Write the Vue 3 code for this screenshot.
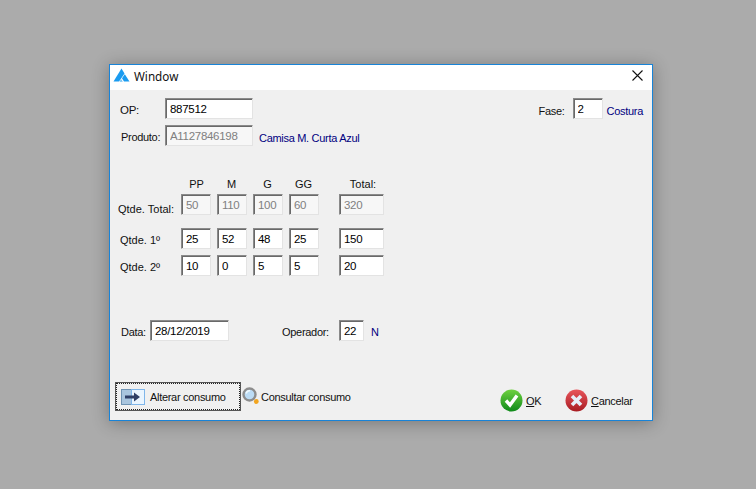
<script setup>
const sizes = ['PP', 'M', 'G', 'GG']

const rows = [
  { label: 'Qtde. Total:', values: [50, 110, 100, 60], total: 320, disabled: true, cls: 'row-total' },
  { label: 'Qtde. 1º', values: [25, 52, 48, 25], total: 150, disabled: false, cls: 'row-first' },
  { label: 'Qtde. 2º', values: [10, 0, 5, 5], total: 20, disabled: false, cls: 'row-second' }
]
</script>

<template>
  <div class="desktop">
    <div class="window">
      <div class="titlebar">
        <svg class="logo" width="17" height="15" viewBox="0 0 17 15">
          <path d="M8.5 0.5 L11.5 5.5 L6 13.5 L0.5 13.5 Z" fill="#1a9bf0" />
          <path d="M11.8 6.2 L16.5 13.5 L11 13.5 L9 10.2 Z" fill="#1a9bf0" />
          <path d="M8 11 L9.8 13.8 L6.6 13.8 Z" fill="#6cc0f5" />
        </svg>
        <span class="title">Window</span>
        <svg class="close" width="11" height="11" viewBox="0 0 11 11">
          <path d="M0.5 0.5 L10.5 10.5 M10.5 0.5 L0.5 10.5" stroke="#111" stroke-width="1.1" fill="none" />
        </svg>
      </div>

      <div class="body">
        <div class="top">
          <div class="top-left">
            <div class="field-row">
              <label class="lbl-main lbl-op">OP:</label>
              <input class="input input-main" value="887512" />
            </div>
            <div class="field-row field-row-second">
              <label class="lbl-main lbl-produto">Produto:</label>
              <input class="input input-main" value="A1127846198" disabled />
              <span class="link-text desc">Camisa M. Curta Azul</span>
            </div>
          </div>
          <div class="field-row fase">
            <label class="lbl-fase">Fase:</label>
            <input class="input input-fase" value="2" />
            <span class="link-text costura">Costura</span>
          </div>
        </div>

        <div class="qty">
          <div class="qty-head">
            <span class="qty-spacer"></span>
            <span v-for="s in sizes" :key="s" class="head-cell">{{ s }}</span>
            <span class="head-cell head-total">Total:</span>
          </div>
          <div v-for="row in rows" :key="row.label" class="qty-row" :class="row.cls">
            <label class="qty-label">{{ row.label }}</label>
            <input
              v-for="(v, i) in row.values"
              :key="i"
              class="input input-qty"
              :value="v"
              :disabled="row.disabled"
            />
            <input class="input input-sum" :value="row.total" :disabled="row.disabled" />
          </div>
        </div>

        <div class="data-row">
          <label class="lbl-data">Data:</label>
          <input class="input input-data" value="28/12/2019" />
          <label class="lbl-operador">Operador:</label>
          <input class="input input-op" value="22" />
          <span class="link-text oper-name">N</span>
        </div>

        <div class="footer">
          <button class="btn-alterar">
            <svg width="24" height="16" viewBox="0 0 24 16">
              <rect x="0.5" y="0.5" width="10" height="15" fill="#a9c5de" stroke="#6f93b3" />
              <rect x="10.5" y="0.5" width="13" height="15" fill="#eaf5ff" stroke="#7fb6ea" />
              <path d="M4 6.5 H13 V3.5 L19 8 L13 12.5 V9.5 H4 Z" fill="#2f3f66" />
            </svg>
            <span>Alterar consumo</span>
          </button>
          <button class="btn-flat btn-consultar">
            <svg width="18" height="18" viewBox="0 0 18 18">
              <circle cx="7.5" cy="7.5" r="6" fill="#bcdcf5" stroke="#8d8d8d" stroke-width="2.4" />
              <path d="M4.2 6.5 A3.5 3.5 0 0 1 8 3.8" stroke="#f2fbff" stroke-width="1.6" fill="none" />
              <circle cx="14.3" cy="14.5" r="2.4" fill="#f2a51f" />
            </svg>
            <span>Consultar consumo</span>
          </button>
          <button class="btn-flat btn-ok">
            <svg width="23" height="23" viewBox="0 0 23 23">
              <defs>
                <linearGradient id="okFill" x1="0" y1="0" x2="0" y2="1">
                  <stop offset="0" stop-color="#6fd13f" />
                  <stop offset="1" stop-color="#0f8a1a" />
                </linearGradient>
              </defs>
              <circle cx="11.5" cy="11.5" r="11" fill="url(#okFill)" />
              <path d="M6 11.5 L10 16 L17 6.5" stroke="#fff" stroke-width="3.4" fill="none" />
            </svg>
            <span><u>O</u>K</span>
          </button>
          <button class="btn-flat btn-cancelar">
            <svg width="23" height="23" viewBox="0 0 23 23">
              <defs>
                <linearGradient id="noFill" x1="0" y1="0" x2="0" y2="1">
                  <stop offset="0" stop-color="#e8555c" />
                  <stop offset="1" stop-color="#a81c22" />
                </linearGradient>
              </defs>
              <circle cx="11.5" cy="11.5" r="11" fill="url(#noFill)" />
              <path d="M7 7 L16 16 M16 7 L7 16" stroke="#e6eef8" stroke-width="3.6" fill="none" />
            </svg>
            <span><u>C</u>ancelar</span>
          </button>
        </div>
      </div>
    </div>
  </div>
</template>

<style>
html,
body {
  margin: 0;
  background: #ababab;
}
</style>

<style scoped>
.desktop {
  width: 756px;
  height: 489px;
  box-sizing: border-box;
  padding: 64px 0 0 109px;
  background: #ababab;
  overflow: hidden;
  font-family: "Liberation Sans", Arial, sans-serif;
  font-size: 11px;
  letter-spacing: -0.3px;
  color: #111;
}

.window {
  width: 544px;
  height: 357px;
  box-sizing: border-box;
  border: 1px solid #1883d7;
  background: #f0f0f0;
  box-shadow: 0 2px 16px rgba(0, 0, 0, 0.3);
  display: flex;
  flex-direction: column;
}

.titlebar {
  height: 25px;
  flex: none;
  box-sizing: border-box;
  background: #fff;
  display: flex;
  align-items: center;
  padding: 0 9px 4px 3px;
}

.logo {
  margin-right: 4px;
}

.title {
  font-family: "Noto Sans", sans-serif;
  font-size: 11.7px;
  letter-spacing: 0;
}

.close {
  margin-left: auto;
}

.body {
  flex: 1;
  display: flex;
  flex-direction: column;
  min-height: 0;
}

.input {
  box-sizing: border-box;
  height: 21px;
  margin: 0;
  padding: 0 0 0 4px;
  border: 1px solid;
  border-color: #8a8a8a #e3e3e3 #e3e3e3 #8a8a8a;
  box-shadow: inset 1px 1px 0 #696969;
  background: #fff;
  font-family: "Liberation Sans", Arial, sans-serif;
  font-size: 11.5px;
  letter-spacing: -0.3px;
  color: #000;
  outline: none;
}

.input:disabled {
  background: #f7f7f7;
  color: #808080;
}

.top {
  display: flex;
  justify-content: space-between;
  padding: 8px 9px 0 10px;
}

.field-row {
  display: flex;
  align-items: center;
}

.field-row-second {
  margin-top: 6px;
}

.lbl-main {
  width: 45px;
  flex: none;
}

.lbl-op {
  font-size: 11.5px;
  padding-top: 2px;
}

.lbl-produto {
  padding: 3px 0 0 1px;
  box-sizing: border-box;
}

.input-main {
  width: 88px;
}

.link-text {
  color: #000080;
}

.desc {
  margin-left: 6px;
  padding-top: 5px;
}

.fase {
  align-self: flex-start;
}

.lbl-fase {
  margin-right: 8px;
  padding-top: 5px;
}

.input-fase {
  width: 30px;
}

.costura {
  margin-left: 4px;
  padding-top: 5px;
}

.qty {
  margin-top: 31px;
  padding-left: 8px;
}

.qty-head,
.qty-row {
  display: flex;
  gap: 6px;
}

.qty-head {
  height: 17px;
  box-sizing: border-box;
  padding-top: 1px;
  letter-spacing: 0;
}

.qty-spacer,
.qty-label {
  width: 57px;
  flex: none;
}

.qty-label {
  white-space: nowrap;
  align-self: center;
  padding-top: 9px;
  letter-spacing: 0;
}

.row-first .qty-label,
.row-second .qty-label {
  padding-left: 2px;
  box-sizing: border-box;
  padding-top: 2px;
}

.head-cell {
  width: 30px;
  text-align: center;
  padding-left: 1px;
  box-sizing: border-box;
}

.head-cell:nth-child(3),
.head-cell:nth-child(4),
.head-cell:nth-child(5) {
  padding-left: 0;
  padding-right: 1px;
}

.head-cell.head-total {
  width: 45px;
  margin-left: 14px;
  padding: 0 0 0 3px;
}

.row-first {
  margin-top: 13px;
}

.row-second {
  margin-top: 6px;
}

.input-qty {
  width: 30px;
}

.input-sum {
  width: 45px;
  margin-left: 14px;
}

.data-row {
  display: flex;
  align-items: center;
  margin-top: 44px;
  padding-left: 11px;
}

.data-row label,
.oper-name {
  padding-top: 3px;
}

.lbl-data {
  width: 29px;
}

.input-data {
  width: 79px;
}

.lbl-operador {
  margin-left: 53px;
  width: 57px;
}

.input-op {
  width: 25px;
}

.oper-name {
  margin-left: 7px;
}

.footer {
  margin-top: auto;
  height: 38px;
  flex: none;
  box-sizing: border-box;
  padding-left: 5px;
  display: flex;
  align-items: flex-start;
}

button {
  flex: none;
  font: inherit;
  letter-spacing: inherit;
  color: inherit;
  background: none;
  border: none;
  padding: 0;
  margin: 0;
  display: flex;
  align-items: center;
  white-space: nowrap;
}

button span {
  padding-top: 1px;
}

.btn-alterar {
  width: 126px;
  height: 29px;
  box-sizing: border-box;
  padding-left: 5px;
  gap: 5px;
  border: 1px solid #555;
  outline: 1px dotted #222;
  outline-offset: -2px;
}

.btn-consultar {
  width: 109px;
  height: 29px;
  margin-left: 1px;
  gap: 1px;
}

.btn-consultar svg {
  margin-top: -2px;
}

.btn-ok {
  width: 65px;
  margin-left: 149px;
  margin-top: 7px;
  gap: 3px;
}

.btn-cancelar {
  margin-top: 7px;
  gap: 3px;
}
</style>
